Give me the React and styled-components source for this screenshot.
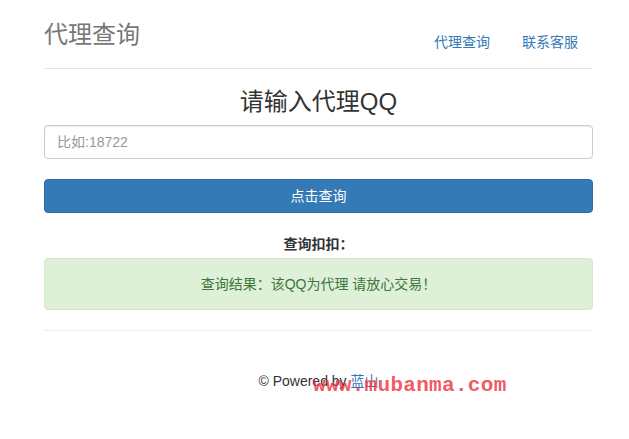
import React from "react";
import styled, { createGlobalStyle } from "styled-components";

const Global = createGlobalStyle`
  html, body { margin: 0; padding: 0; background: #fff; }
  body {
    font-family: "Liberation Sans", Arial, "Noto Sans CJK SC", sans-serif;
    font-size: 14px;
    line-height: 20px;
    color: #333;
  }
  * { box-sizing: border-box; }
`;

const Container = styled.div`
  width: 549px;
  margin-left: 44px;
`;

const Header = styled.header`
  display: flex;
  justify-content: space-between;
  align-items: flex-start;
  padding-top: 20px;
  padding-bottom: 6px;
  border-bottom: 1px solid #e5e5e5;
`;

const Brand = styled.h3`
  margin: 0;
  font-size: 24px;
  line-height: 30px;
  font-weight: 400;
  color: #777;
`;

const Nav = styled.nav`
  display: flex;
  gap: 2px;
  margin-top: 2px;
`;

const NavLink = styled.a`
  display: block;
  padding: 10px 15px;
  line-height: 20px;
  font-size: 14px;
  color: #337ab7;
  text-decoration: none;
`;

const Title = styled.h3`
  margin: 20px 0 10px;
  text-align: center;
  font-size: 24px;
  line-height: 26.4px;
  font-weight: 400;
  color: #333;
`;

const Input = styled.input`
  display: block;
  width: 100%;
  height: 34px;
  padding: 6px 12px;
  font: inherit;
  font-size: 14px;
  color: #555;
  border: 1px solid #ccc;
  border-radius: 4px;
  box-shadow: inset 0 1px 1px rgba(0, 0, 0, 0.075);
  outline: none;
  &::placeholder { color: #999; }
`;

const Button = styled.button`
  display: block;
  width: 100%;
  height: 34px;
  margin-top: 20px;
  padding: 6px 12px;
  font: inherit;
  font-size: 14px;
  color: #fff;
  background: #337ab7;
  border: 1px solid #2e6da4;
  border-radius: 4px;
  text-align: center;
`;

const ResultLabel = styled.h5`
  margin: 21px 0 4px;
  text-align: center;
  font-size: 14px;
  line-height: 20px;
  font-weight: 700;
  color: #333;
`;

const Alert = styled.div`
  padding: 15px;
  border: 1px solid #d6e9c6;
  border-radius: 4px;
  background: #dff0d8;
  color: #3c763d;
  text-align: center;
  line-height: 20px;
`;

const Rule = styled.hr`
  margin: 20px 0 0;
  border: 0;
  border-top: 1px solid #eee;
`;

const Footer = styled.footer`
  position: relative;
  margin-top: 40px;
  text-align: center;
  line-height: 20px;
  color: #333;
`;

const FooterLink = styled.a`
  color: #337ab7;
  text-decoration: none;
`;

const Watermark = styled.span`
  position: absolute;
  left: 269px;
  top: 3px;
  font-family: "Liberation Mono", "Courier New", monospace;
  font-weight: 700;
  font-size: 21px;
  letter-spacing: 0.3px;
  line-height: 24px;
  color: rgba(236, 52, 64, 0.82);
  white-space: nowrap;
  pointer-events: none;
`;

export default function App() {
  return (
    <>
      <Global />
      <Container>
        <Header>
          <Brand>代理查询</Brand>
          <Nav>
            <NavLink href="#">代理查询</NavLink>
            <NavLink href="#">联系客服</NavLink>
          </Nav>
        </Header>
        <Title>请输入代理QQ</Title>
        <Input placeholder="比如:18722" />
        <Button>点击查询</Button>
        <ResultLabel>查询扣扣：</ResultLabel>
        <Alert>查询结果：该QQ为代理 请放心交易！</Alert>
        <Rule />
        <Footer>
          © Powered by <FooterLink href="#">蓝山</FooterLink>
          <Watermark>www.mubanma.com</Watermark>
        </Footer>
      </Container>
    </>
  );
}
